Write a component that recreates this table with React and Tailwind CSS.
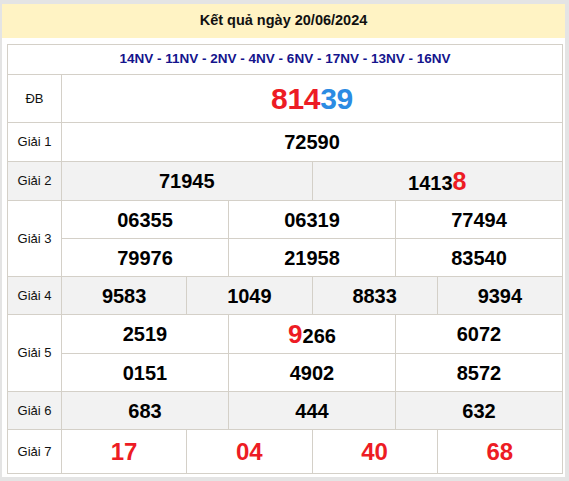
import React from "react";

const B = "border-[#d4d0c8]";

function Cells({ items, h, big }) {
  return (
    <div className={`flex ${h}`}>
      {items.map((it, i) => (
        <div
          key={i}
          className={`flex-1 flex items-center justify-center ${i > 0 ? `border-l ${B}` : ""} ${big ? "text-[24px] text-[#ed1c24]" : "text-[20px] text-black"} font-bold leading-none`}
        >
          {it}
        </div>
      ))}
    </div>
  );
}

function Row({ label, bg, children, last }) {
  return (
    <div className={`flex ${last ? "" : `border-b ${B}`} ${bg ? "bg-[#f2f2f2]" : ""}`}>
      <div className={`w-[54px] shrink-0 border-r ${B} flex items-center justify-center text-[13px] text-[#111]`}>
        {label}
      </div>
      <div className="flex-1 flex flex-col">{children}</div>
    </div>
  );
}

const red = (t, size = "text-[25px]") => <span className={`text-[#ed1c24] ${size}`}>{t}</span>;

export default function App() {
  return (
    <div
      className="w-[569px] h-[481px] bg-white border-l-2 border-t-4 border-r-4 border-b-4 border-[#e4e4e4] overflow-hidden"
      style={{ fontFamily: '"Liberation Sans", Arial, sans-serif' }}
    >
      <div className="h-[34px] bg-[#fff3c4] flex items-center justify-center text-[14.5px] font-bold text-[#111]">
        Kết quả ngày 20/06/2024
      </div>
      <div className={`ml-[5px] mt-[6px] w-[556px] border ${B}`}>
        <div className={`h-[30px] border-b ${B} flex items-center justify-center text-[13.5px] font-bold text-[#14148c]`}>
          14NV - 11NV - 2NV - 4NV - 6NV - 17NV - 13NV - 16NV
        </div>
        <Row label="ĐB">
          <div className="h-[47px] flex items-center justify-center font-bold text-[30px] leading-none tracking-[-0.3px]">
            <span className="text-[#ed1c24]">814</span>
            <span className="text-[#2b8be3]">39</span>
          </div>
        </Row>
        <Row label="Giải 1">
          <Cells h="h-[38px]" items={["72590"]} />
        </Row>
        <Row label="Giải 2" bg>
          <Cells h="h-[38px]" items={["71945", <span key="a" className="flex items-baseline">1413{red("8")}</span>]} />
        </Row>
        <Row label="Giải 3">
          <div className={`border-b ${B}`}>
            <Cells h="h-[37px]" items={["06355", "06319", "77494"]} />
          </div>
          <Cells h="h-[37px]" items={["79976", "21958", "83540"]} />
        </Row>
        <Row label="Giải 4" bg>
          <Cells h="h-[37px]" items={["9583", "1049", "8833", "9394"]} />
        </Row>
        <Row label="Giải 5">
          <div className={`border-b ${B}`}>
            <Cells h="h-[38px]" items={["2519", <span key="b" className="flex items-baseline">{red("9", "text-[26px]")}266</span>, "6072"]} />
          </div>
          <Cells h="h-[37px]" items={["0151", "4902", "8572"]} />
        </Row>
        <Row label="Giải 6" bg>
          <Cells h="h-[37px]" items={["683", "444", "632"]} />
        </Row>
        <Row label="Giải 7" last>
          <Cells h="h-[43px]" big items={["17", "04", "40", "68"]} />
        </Row>
      </div>
    </div>
  );
}
